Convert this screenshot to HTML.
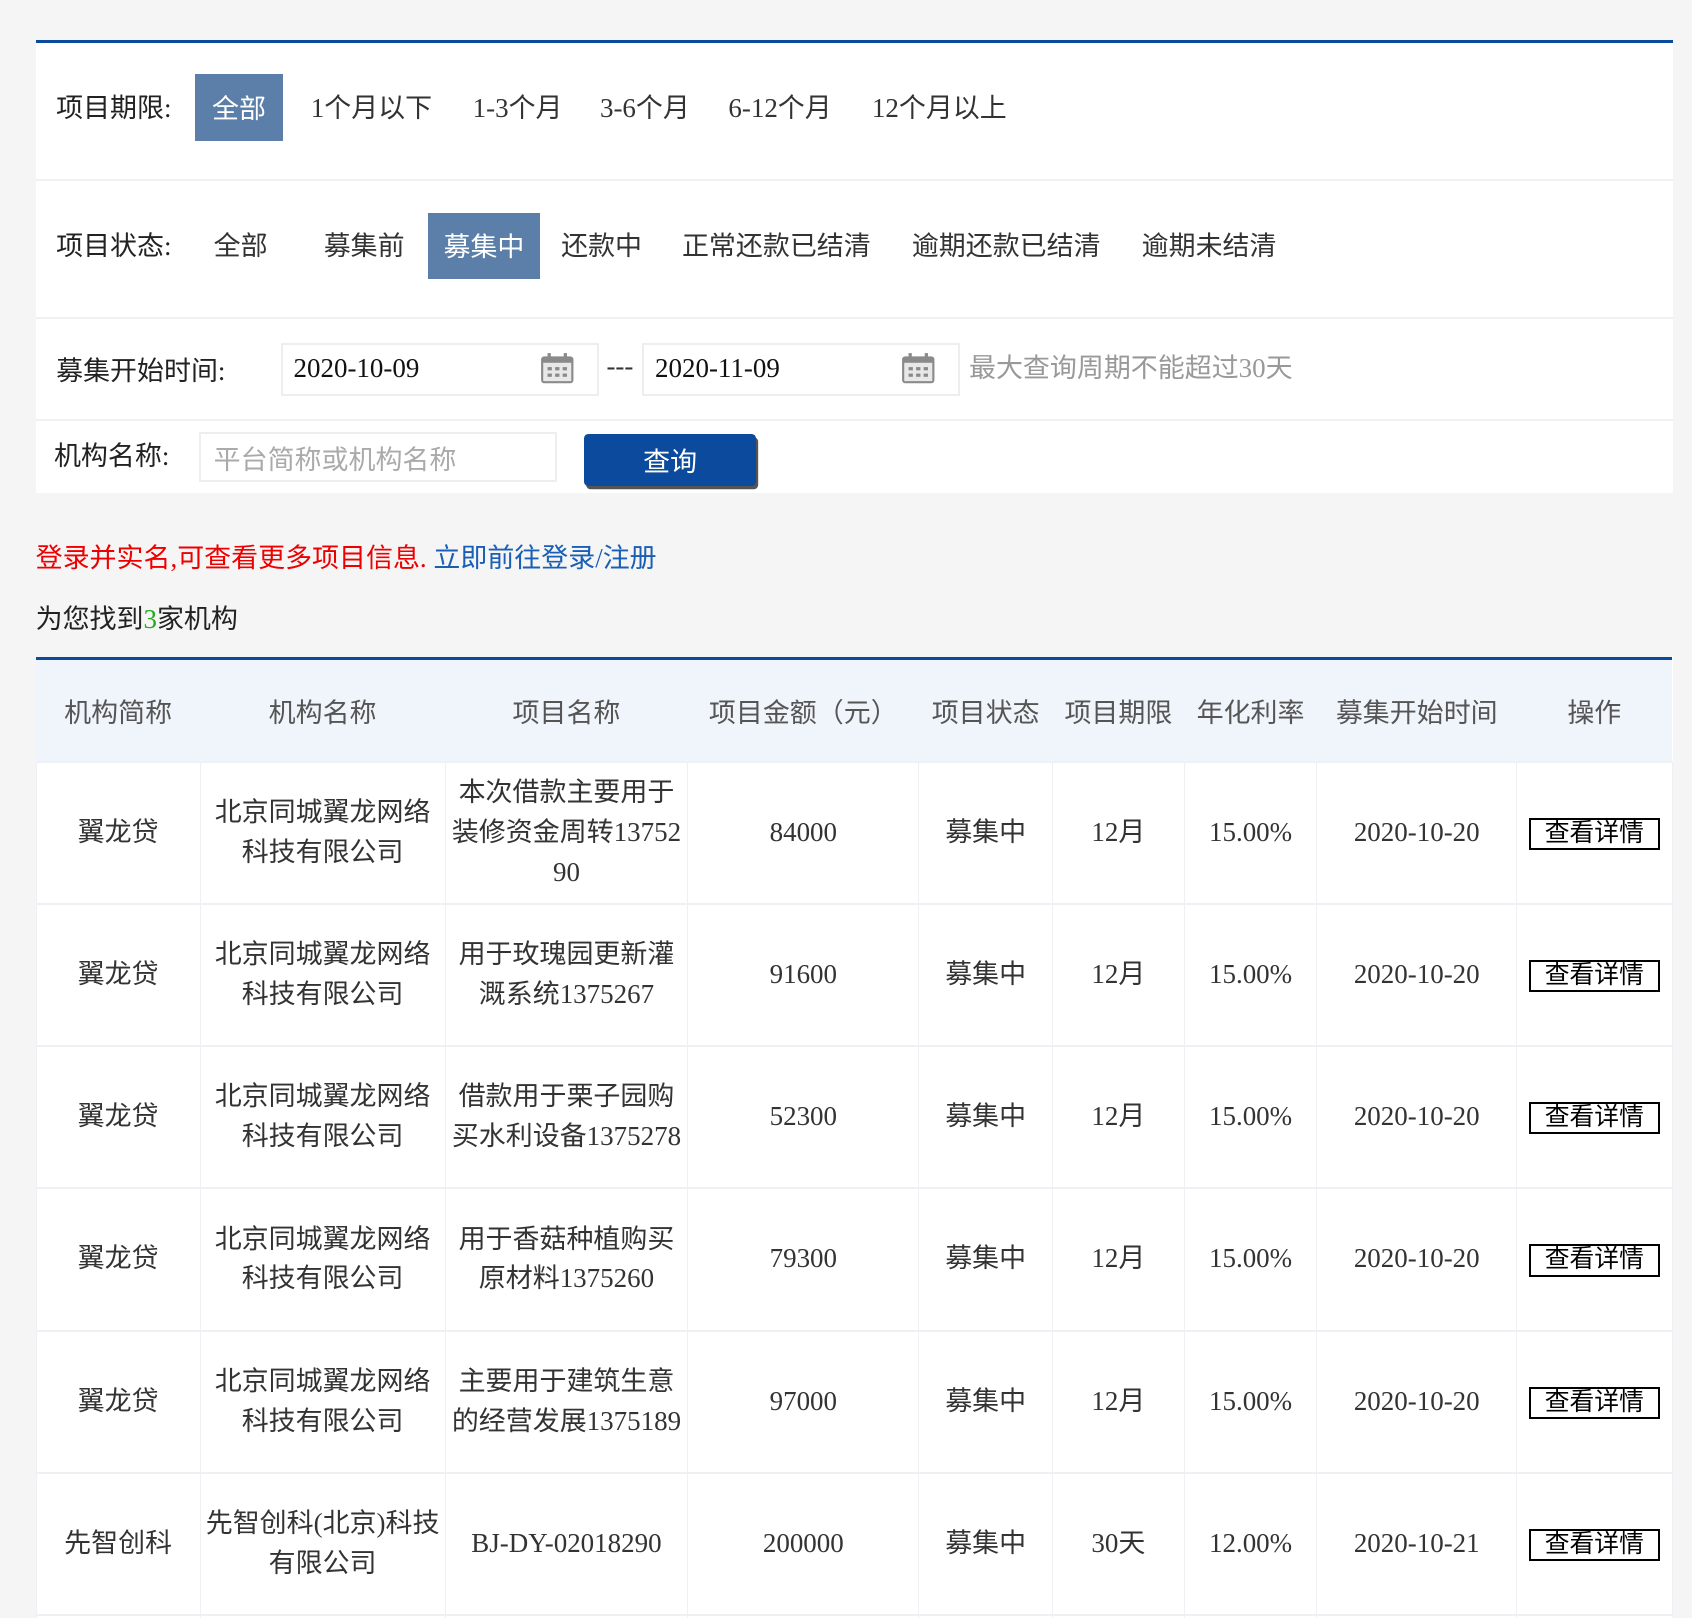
<!DOCTYPE html>
<html><head><meta charset="utf-8"><style>
html,body{margin:0;padding:0;background:#f5f5f5;overflow:hidden}
html{height:1618px}
body{width:1568px;height:1499px;zoom:1.07908;position:relative;font-family:"Liberation Serif","Noto Sans CJK SC",serif;color:#333;font-size:25px;overflow:hidden}
.a{position:absolute;white-space:nowrap}
.panel{position:absolute;left:33px;top:37px;width:1517px;height:420px;background:#fff;border-top:3px solid #0b4a9c;box-sizing:border-box}
.sep{position:absolute;left:33px;width:1517px;height:2px;background:#f1f1f1}
.act{position:absolute;background:#5b7fa8;color:#fff;text-align:center}
.inp{position:absolute;border:2px solid #eee;background:#fff;box-sizing:border-box}
.lab{color:#222}
.cal{position:absolute;width:32px;height:30px}
table{position:absolute;left:33px;top:609px;width:1517px;border-collapse:collapse;border-top:3px solid #0b4a9c;background:#fff}
th{background:#f0f5fc;color:#555;font-weight:normal;height:93px;padding:0;text-align:center;border-bottom:2px solid #eef1f5}
td{height:130px;padding:0;text-align:center;border:1px solid #eef0f4;border-bottom:2px solid #eef0f4;line-height:37px;color:#333}
.btn{display:inline-block;border:2px solid #000;width:118px;height:26px;line-height:26px;font-size:23px;color:#000}
</style></head><body>
<div class="panel"></div>
<div class="sep" style="top:166px"></div>
<div class="sep" style="top:294px"></div>
<div class="sep" style="top:388px"></div>

<div class="a lab" style="left:52px;top:80px">项目期限:</div>
<div class="act" style="left:181px;top:69px;width:81px;height:62px;line-height:66px">全部</div>
<div class="a" style="left:288px;top:80px">1个月以下</div>
<div class="a" style="left:438px;top:80px">1-3个月</div>
<div class="a" style="left:556px;top:80px">3-6个月</div>
<div class="a" style="left:675px;top:80px">6-12个月</div>
<div class="a" style="left:808px;top:80px">12个月以上</div>

<div class="a lab" style="left:52px;top:208px">项目状态:</div>
<div class="a" style="left:198px;top:208px">全部</div>
<div class="a" style="left:300px;top:208px">募集前</div>
<div class="act" style="left:397px;top:197px;width:103px;height:62px;line-height:64px">募集中</div>
<div class="a" style="left:520px;top:208px">还款中</div>
<div class="a" style="left:632px;top:208px">正常还款已结清</div>
<div class="a" style="left:845px;top:208px">逾期还款已结清</div>
<div class="a" style="left:1058px;top:208px">逾期未结清</div>

<div class="a lab" style="left:52px;top:323px">募集开始时间:</div>
<div class="inp" style="left:260px;top:318px;width:295px;height:49px"></div>
<div class="a" style="left:272px;top:327px;color:#111">2020-10-09</div>
<svg class="cal" style="left:500px;top:326px" viewBox="0 0 32 30"><rect x="1" y="4" width="30" height="25" rx="3" fill="#8a8a8a"/><rect x="3" y="10" width="26" height="17" fill="#e8e8e8"/><rect x="7" y="1" width="3" height="7" fill="#8a8a8a"/><rect x="22" y="1" width="3" height="7" fill="#8a8a8a"/><g fill="#8a8a8a"><rect x="7" y="14" width="4" height="3"/><rect x="14" y="14" width="4" height="3"/><rect x="21" y="14" width="4" height="3"/><rect x="7" y="20" width="4" height="3"/><rect x="14" y="20" width="4" height="3"/><rect x="21" y="20" width="4" height="3"/></g></svg>
<div class="a" style="left:562px;top:325px">---</div>
<div class="inp" style="left:595px;top:318px;width:295px;height:49px"></div>
<div class="a" style="left:607px;top:327px;color:#111">2020-11-09</div>
<svg class="cal" style="left:835px;top:326px" viewBox="0 0 32 30"><rect x="1" y="4" width="30" height="25" rx="3" fill="#8a8a8a"/><rect x="3" y="10" width="26" height="17" fill="#e8e8e8"/><rect x="7" y="1" width="3" height="7" fill="#8a8a8a"/><rect x="22" y="1" width="3" height="7" fill="#8a8a8a"/><g fill="#8a8a8a"><rect x="7" y="14" width="4" height="3"/><rect x="14" y="14" width="4" height="3"/><rect x="21" y="14" width="4" height="3"/><rect x="7" y="20" width="4" height="3"/><rect x="14" y="20" width="4" height="3"/><rect x="21" y="20" width="4" height="3"/></g></svg>
<div class="a" style="left:898px;top:321px;color:#999">最大查询周期不能超过30天</div>

<div class="a lab" style="left:50px;top:402px">机构名称:</div>
<div class="inp" style="left:184px;top:400px;width:332px;height:47px"></div>
<div class="a" style="left:198px;top:406px;color:#aaa">平台简称或机构名称</div>
<div class="a" style="left:541px;top:402px;width:160px;height:48px;background:#0b4a9c;border-radius:4px;box-shadow:2px 3px 0 #555;color:#fff;text-align:center;line-height:52px">查询</div>

<div class="a" style="left:33px;top:497px;color:#e00">登录并实名,可查看更多项目信息. <span style="color:#1a5fb4">立即前往登录/注册</span></div>
<div class="a" style="left:33px;top:553px;color:#222">为您找到<span style="color:#2a2">3</span>家机构</div>

<table>
<tr><th style="width:152px">机构简称</th><th style="width:227px">机构名称</th><th style="width:225px">项目名称</th><th style="width:214px">项目金额（元）</th><th style="width:124px">项目状态</th><th style="width:122px">项目期限</th><th style="width:123px">年化利率</th><th style="width:185px">募集开始时间</th><th>操作</th></tr>
<tr><td>翼龙贷</td><td>北京同城翼龙网络<br>科技有限公司</td><td>本次借款主要用于<br>装修资金周转13752<br>90</td><td>84000</td><td>募集中</td><td>12月</td><td>15.00%</td><td>2020-10-20</td><td><span class="btn">查看详情</span></td></tr>
<tr><td>翼龙贷</td><td>北京同城翼龙网络<br>科技有限公司</td><td>用于玫瑰园更新灌<br>溉系统1375267</td><td>91600</td><td>募集中</td><td>12月</td><td>15.00%</td><td>2020-10-20</td><td><span class="btn">查看详情</span></td></tr>
<tr><td>翼龙贷</td><td>北京同城翼龙网络<br>科技有限公司</td><td>借款用于栗子园购<br>买水利设备1375278</td><td>52300</td><td>募集中</td><td>12月</td><td>15.00%</td><td>2020-10-20</td><td><span class="btn">查看详情</span></td></tr>
<tr><td>翼龙贷</td><td>北京同城翼龙网络<br>科技有限公司</td><td>用于香菇种植购买<br>原材料1375260</td><td>79300</td><td>募集中</td><td>12月</td><td>15.00%</td><td>2020-10-20</td><td><span class="btn">查看详情</span></td></tr>
<tr><td>翼龙贷</td><td>北京同城翼龙网络<br>科技有限公司</td><td>主要用于建筑生意<br>的经营发展1375189</td><td>97000</td><td>募集中</td><td>12月</td><td>15.00%</td><td>2020-10-20</td><td><span class="btn">查看详情</span></td></tr>
<tr><td>先智创科</td><td>先智创科(北京)科技<br>有限公司</td><td>BJ-DY-02018290</td><td>200000</td><td>募集中</td><td>30天</td><td>12.00%</td><td>2020-10-21</td><td><span class="btn">查看详情</span></td></tr>
<tr><td style="height:20px"></td><td></td><td></td><td></td><td></td><td></td><td></td><td></td><td></td></tr>
</table>
</body></html>
